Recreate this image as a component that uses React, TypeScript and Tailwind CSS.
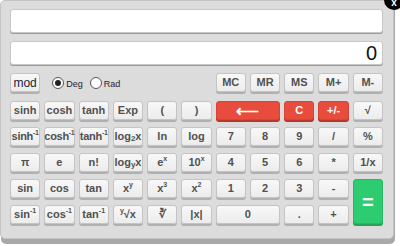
import type { ReactNode } from 'react'

type Tone = 'plain' | 'red' | 'green'

const TONE: Record<Tone, string> = {
  plain: 'bg-gradient-to-b from-[#f8f8f8] to-[#ececec] border-[#c4c4c4] text-[#505050] shadow-[0_2px_0_#b0b0b0]',
  red: 'bg-[#e74c3c] border-[#d8443a] text-white shadow-[0_2px_0_#b8392c]',
  green: 'bg-[#2ecc71] border-[#29b765] text-white shadow-[0_2px_0_#25a35a]',
}

function Key({ children, tone = 'plain', className = '' }: { children: ReactNode; tone?: Tone; className?: string }) {
  return (
    <button className={`flex items-center justify-center rounded-[3px] border text-[11px] font-bold leading-none ${TONE[tone]} ${className}`}>
      {children}
    </button>
  )
}

const Sup = ({ children }: { children: ReactNode }) => <sup className="text-[7px] font-bold">{children}</sup>
const Sub = ({ children }: { children: ReactNode }) => <sub className="text-[8px] font-bold">{children}</sub>

function Radio({ checked, label }: { checked?: boolean; label: string }) {
  return (
    <label className="flex items-center gap-[2px]">
      <span className="flex h-[12px] w-[12px] items-center justify-center rounded-full border border-[#555] bg-white">
        {checked && <span className="h-[6px] w-[6px] rounded-full bg-[#222]" />}
      </span>
      <span className="mt-[4px] text-[9px] text-[#223]">{label}</span>
    </label>
  )
}

export default function App() {
  return (
    <div className="h-[246px] w-[400px] overflow-hidden bg-white font-['Liberation_Sans',Arial,sans-serif]">
      <div className="relative w-[394px] rounded-[5px] border border-[#c4c4c4] bg-[#dcdcdc] pb-[14px] pl-[9px] pr-[10px] pt-[8px] shadow-[1px_5px_0_#a9a9a9]">
        <div className="absolute -right-[11px] -top-[11px] flex h-[20px] w-[20px] items-end justify-center rounded-full bg-black pb-[2px] text-[10px] font-bold leading-none text-white">x</div>

        <div className="h-[24px] rounded-[3px] border border-[#c8c8c8] bg-white shadow-[0_1px_0_#9a9a9a]" />
        <div className="mt-[8px] flex h-[24px] items-center justify-end rounded-[3px] border border-[#c8c8c8] bg-white pr-[5px] text-[20px] text-[#111] shadow-[0_1px_0_#9a9a9a]">0</div>

        <div className="mt-[8px] grid grid-cols-11 gap-x-1">
          <button className="flex h-[19px] items-center justify-center rounded-[3px] border border-[#c4c4c4] bg-gradient-to-b from-[#f8f8f8] to-[#ececec] text-[12px] text-[#223] shadow-[0_2px_0_#b0b0b0]">mod</button>
          <div className="col-span-5 flex items-center gap-[7px] pl-[8px]">
            <Radio checked label="Deg" />
            <Radio label="Rad" />
          </div>
          <Key className="h-[19px]">MC</Key>
          <Key className="h-[19px]">MR</Key>
          <Key className="h-[19px]">MS</Key>
          <Key className="h-[19px]">M+</Key>
          <Key className="h-[19px]">M-</Key>
        </div>

        <div className="mt-[9px] grid grid-cols-11 grid-rows-[repeat(5,19px)] gap-x-1 gap-y-[7px]">
          <Key>sinh</Key>
          <Key>cosh</Key>
          <Key>tanh</Key>
          <Key>Exp</Key>
          <Key>(</Key>
          <Key>)</Key>
          <Key tone="red" className="col-span-2 text-[16px]">⟵</Key>
          <Key tone="red">C</Key>
          <Key tone="red">+/-</Key>
          <Key>√</Key>

          <Key className="tracking-[-0.3px]">sinh<Sup>-1</Sup></Key>
          <Key className="tracking-[-0.3px]">cosh<Sup>-1</Sup></Key>
          <Key className="tracking-[-0.3px]">tanh<Sup>-1</Sup></Key>
          <Key>log<Sub>2</Sub>x</Key>
          <Key>ln</Key>
          <Key>log</Key>
          <Key>7</Key>
          <Key>8</Key>
          <Key>9</Key>
          <Key>/</Key>
          <Key>%</Key>

          <Key>π</Key>
          <Key>e</Key>
          <Key>n!</Key>
          <Key>log<Sub>y</Sub>x</Key>
          <Key>e<Sup>x</Sup></Key>
          <Key>10<Sup>x</Sup></Key>
          <Key>4</Key>
          <Key>5</Key>
          <Key>6</Key>
          <Key>*</Key>
          <Key>1/x</Key>

          <Key>sin</Key>
          <Key>cos</Key>
          <Key>tan</Key>
          <Key>x<Sup>y</Sup></Key>
          <Key>x<Sup>3</Sup></Key>
          <Key>x<Sup>2</Sup></Key>
          <Key>1</Key>
          <Key>2</Key>
          <Key>3</Key>
          <Key>-</Key>
          <Key tone="green" className="row-span-2 text-[20px]">=</Key>

          <Key>sin<Sup>-1</Sup></Key>
          <Key>cos<Sup>-1</Sup></Key>
          <Key>tan<Sup>-1</Sup></Key>
          <Key><Sup>y</Sup>√x</Key>
          <Key>∛</Key>
          <Key>|x|</Key>
          <Key className="col-span-2">0</Key>
          <Key>.</Key>
          <Key>+</Key>
        </div>
      </div>
    </div>
  )
}
